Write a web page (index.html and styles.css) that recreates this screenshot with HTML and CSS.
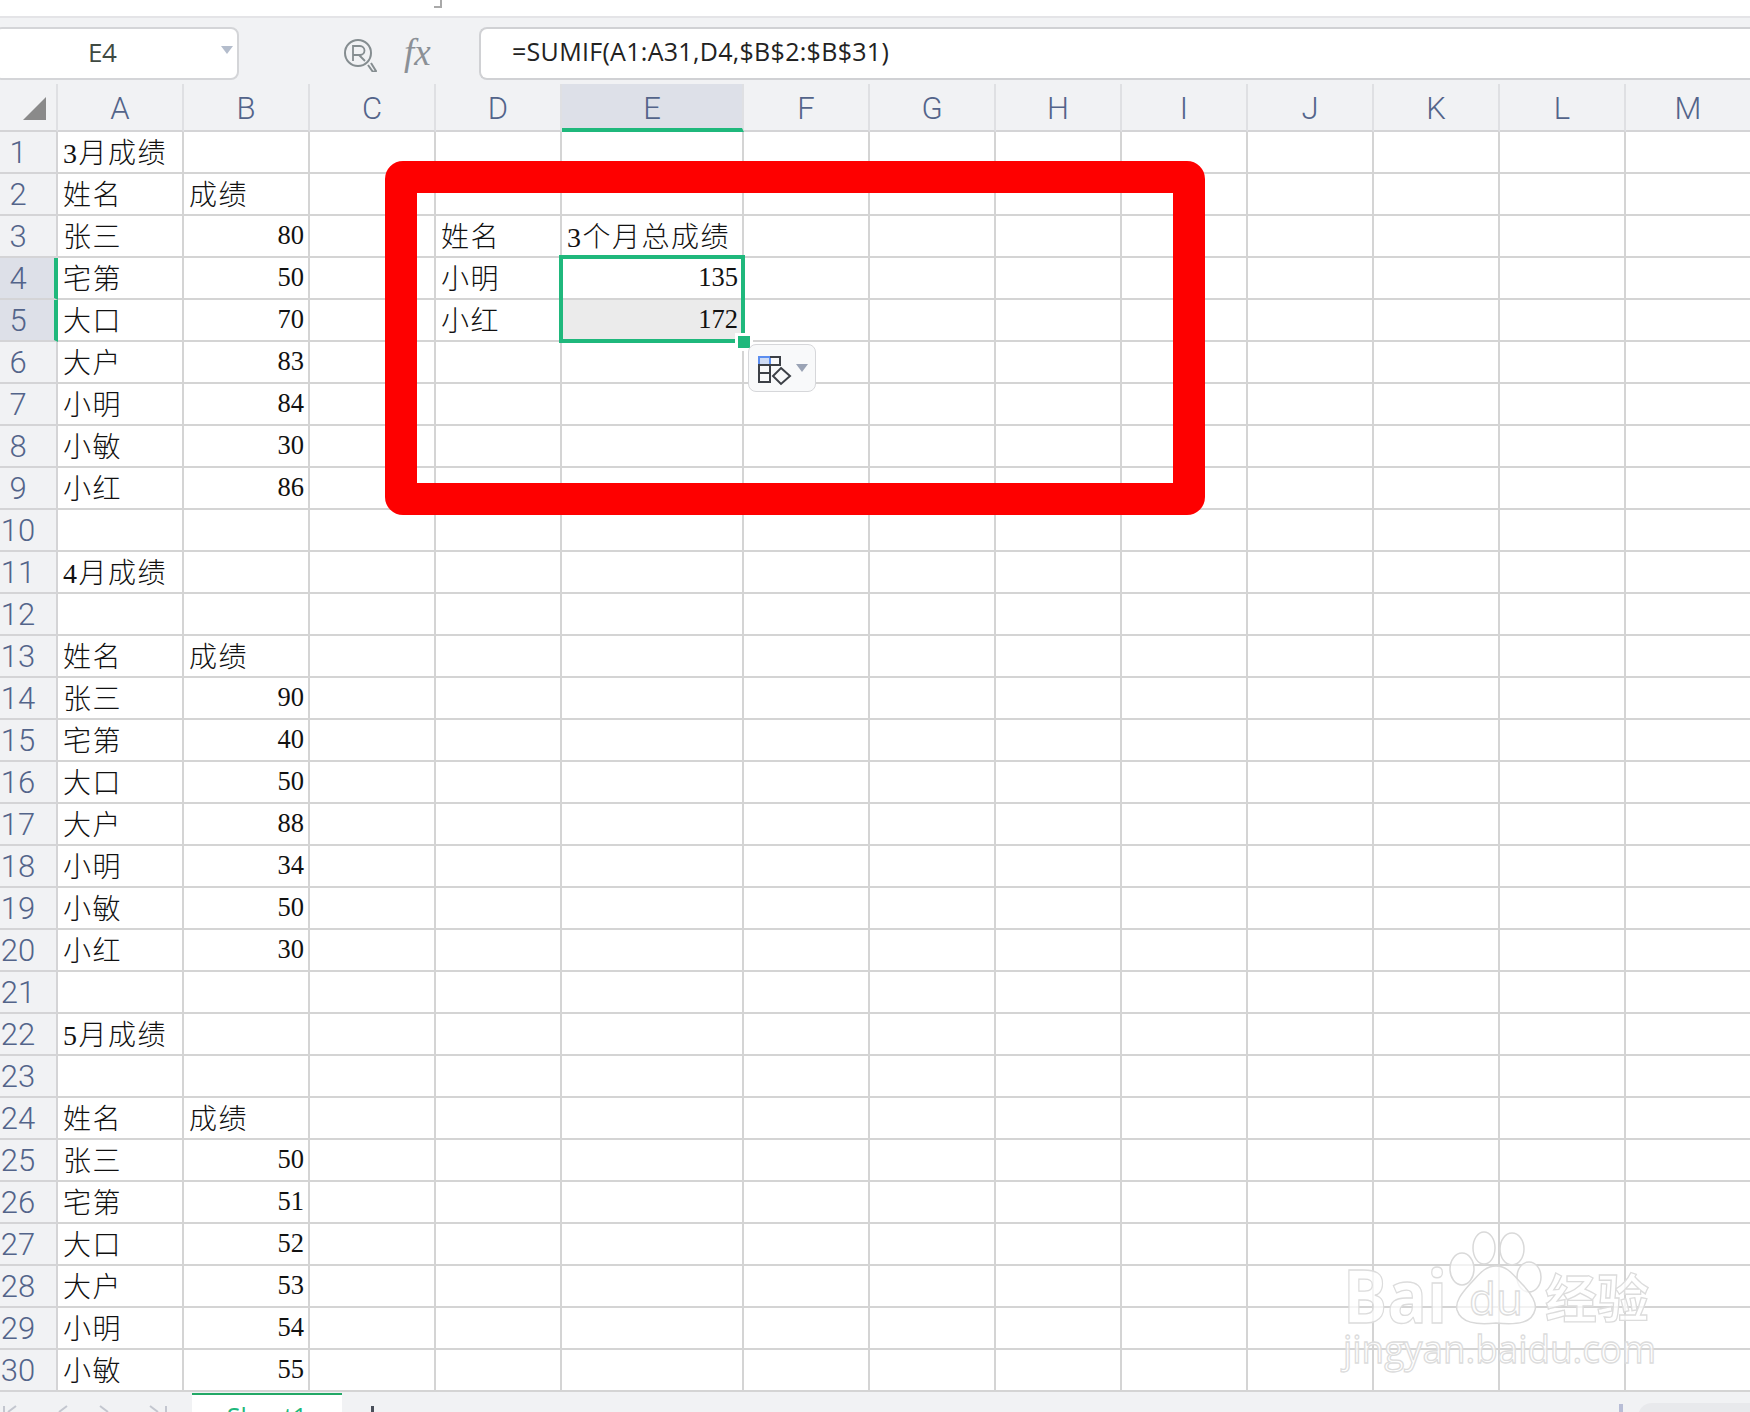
FILE: index.html
```html
<!DOCTYPE html>
<html lang="zh">
<head>
<meta charset="utf-8">
<title>Sheet1</title>
<link rel="stylesheet" href="styles.css">
</head>
<body>
<div class="page">
  <div class="topstrip"><span class="corner-mark"></span></div>
  <div class="fbar">
    <div class="namebox"><span class="nameval">E4</span><span class="namecaret"></span></div>
    <div class="fbtns">
      <svg class="zoomicon" width="34" height="34" viewBox="0 0 34 34" fill="none" stroke="#858d90" stroke-width="2"><circle cx="15" cy="15" r="13"/><path d="M28 25l5 8-3 1-5-7"/><path d="M10 23V8h7a4 4 0 0 1 0 9h-7M16 17l6 6" stroke-width="1.8"/></svg>
      <span class="fx">fx</span>
    </div>
    <div class="formula">=SUMIF(A1:A31,D4,$B$2:$B$31)</div>
  </div>
  <table class="sheet">
    <colgroup><col class="c-h"><col class="c-n"><col class="c-n"><col class="c-n"><col class="c-n"><col class="c-w"><col class="c-n"><col class="c-n"><col class="c-n"><col class="c-n"><col class="c-n"><col class="c-n"><col class="c-n"><col class="c-n"></colgroup>
    <thead><tr><th class="corner"><span class="tri"></span></th><th>A</th><th>B</th><th>C</th><th>D</th><th class="sel">E</th><th>F</th><th>G</th><th>H</th><th>I</th><th>J</th><th>K</th><th>L</th><th>M</th></tr></thead>
    <tbody>
      <tr><th>1</th><td>3月成绩</td><td></td><td></td><td></td><td></td><td></td><td></td><td></td><td></td><td></td><td></td><td></td><td></td></tr>
      <tr><th>2</th><td>姓名</td><td>成绩</td><td></td><td></td><td></td><td></td><td></td><td></td><td></td><td></td><td></td><td></td><td></td></tr>
      <tr><th>3</th><td>张三</td><td class="n">80</td><td></td><td>姓名</td><td>3个月总成绩</td><td></td><td></td><td></td><td></td><td></td><td></td><td></td><td></td></tr>
      <tr><th class="sel">4</th><td>宅第</td><td class="n">50</td><td></td><td>小明</td><td class="n">135</td><td></td><td></td><td></td><td></td><td></td><td></td><td></td><td></td></tr>
      <tr><th class="sel">5</th><td>大口</td><td class="n">70</td><td></td><td>小红</td><td class="n grey">172</td><td></td><td></td><td></td><td></td><td></td><td></td><td></td><td></td></tr>
      <tr><th>6</th><td>大户</td><td class="n">83</td><td></td><td></td><td></td><td></td><td></td><td></td><td></td><td></td><td></td><td></td><td></td></tr>
      <tr><th>7</th><td>小明</td><td class="n">84</td><td></td><td></td><td></td><td></td><td></td><td></td><td></td><td></td><td></td><td></td><td></td></tr>
      <tr><th>8</th><td>小敏</td><td class="n">30</td><td></td><td></td><td></td><td></td><td></td><td></td><td></td><td></td><td></td><td></td><td></td></tr>
      <tr><th>9</th><td>小红</td><td class="n">86</td><td></td><td></td><td></td><td></td><td></td><td></td><td></td><td></td><td></td><td></td><td></td></tr>
      <tr><th>10</th><td></td><td></td><td></td><td></td><td></td><td></td><td></td><td></td><td></td><td></td><td></td><td></td><td></td></tr>
      <tr><th>11</th><td>4月成绩</td><td></td><td></td><td></td><td></td><td></td><td></td><td></td><td></td><td></td><td></td><td></td><td></td></tr>
      <tr><th>12</th><td></td><td></td><td></td><td></td><td></td><td></td><td></td><td></td><td></td><td></td><td></td><td></td><td></td></tr>
      <tr><th>13</th><td>姓名</td><td>成绩</td><td></td><td></td><td></td><td></td><td></td><td></td><td></td><td></td><td></td><td></td><td></td></tr>
      <tr><th>14</th><td>张三</td><td class="n">90</td><td></td><td></td><td></td><td></td><td></td><td></td><td></td><td></td><td></td><td></td><td></td></tr>
      <tr><th>15</th><td>宅第</td><td class="n">40</td><td></td><td></td><td></td><td></td><td></td><td></td><td></td><td></td><td></td><td></td><td></td></tr>
      <tr><th>16</th><td>大口</td><td class="n">50</td><td></td><td></td><td></td><td></td><td></td><td></td><td></td><td></td><td></td><td></td><td></td></tr>
      <tr><th>17</th><td>大户</td><td class="n">88</td><td></td><td></td><td></td><td></td><td></td><td></td><td></td><td></td><td></td><td></td><td></td></tr>
      <tr><th>18</th><td>小明</td><td class="n">34</td><td></td><td></td><td></td><td></td><td></td><td></td><td></td><td></td><td></td><td></td><td></td></tr>
      <tr><th>19</th><td>小敏</td><td class="n">50</td><td></td><td></td><td></td><td></td><td></td><td></td><td></td><td></td><td></td><td></td><td></td></tr>
      <tr><th>20</th><td>小红</td><td class="n">30</td><td></td><td></td><td></td><td></td><td></td><td></td><td></td><td></td><td></td><td></td><td></td></tr>
      <tr><th>21</th><td></td><td></td><td></td><td></td><td></td><td></td><td></td><td></td><td></td><td></td><td></td><td></td><td></td></tr>
      <tr><th>22</th><td>5月成绩</td><td></td><td></td><td></td><td></td><td></td><td></td><td></td><td></td><td></td><td></td><td></td><td></td></tr>
      <tr><th>23</th><td></td><td></td><td></td><td></td><td></td><td></td><td></td><td></td><td></td><td></td><td></td><td></td><td></td></tr>
      <tr><th>24</th><td>姓名</td><td>成绩</td><td></td><td></td><td></td><td></td><td></td><td></td><td></td><td></td><td></td><td></td><td></td></tr>
      <tr><th>25</th><td>张三</td><td class="n">50</td><td></td><td></td><td></td><td></td><td></td><td></td><td></td><td></td><td></td><td></td><td></td></tr>
      <tr><th>26</th><td>宅第</td><td class="n">51</td><td></td><td></td><td></td><td></td><td></td><td></td><td></td><td></td><td></td><td></td><td></td></tr>
      <tr><th>27</th><td>大口</td><td class="n">52</td><td></td><td></td><td></td><td></td><td></td><td></td><td></td><td></td><td></td><td></td><td></td></tr>
      <tr><th>28</th><td>大户</td><td class="n">53</td><td></td><td></td><td></td><td></td><td></td><td></td><td></td><td></td><td></td><td></td><td></td></tr>
      <tr><th>29</th><td>小明</td><td class="n">54</td><td></td><td></td><td></td><td></td><td></td><td></td><td></td><td></td><td></td><td></td><td></td></tr>
      <tr><th>30</th><td>小敏</td><td class="n">55</td><td></td><td></td><td></td><td></td><td></td><td></td><td></td><td></td><td></td><td></td><td></td></tr>
    </tbody>
  </table>
  <div class="tabbar">
    <svg class="tabnav" width="170" height="20" viewBox="0 0 170 20" fill="none" stroke="#c3c6cf" stroke-width="2"><path d="M4 14v6M16 14l-8 6M67 14l-8 6M100 14l8 6M150 14l8 6M166 14v6"/></svg>
    <div class="tab">Sheet1</div>
    <span class="tabadd"></span>
    <span class="tabsplit"></span>
    <span class="tabscroll"></span>
  </div>

  <div class="redbox"></div>
  <div class="selection"><span class="handle"></span></div>
  <div class="pastebtn">
    <svg width="66" height="46" viewBox="0 0 66 46" fill="none" stroke="#3c4046" stroke-width="2"><rect x="10" y="12" width="11" height="8" fill="#cfdcf5" stroke="#5b8def"/><path d="M21 12h10v8H21M10 20h11v17H10zM10 28h11"/><path d="M32 23l9 8-9 8-8-8z" fill="#f8f9fa"/><path d="M47 19h12l-6 8z" fill="#9aa3b5" stroke="none"/></svg>
  </div>
  <svg class="watermark" width="330" height="160" viewBox="0 0 330 160" aria-label="Baidu 经验">
    <g class="wm-shape"><ellipse cx="122" cy="43" rx="12" ry="16"/><ellipse cx="144" cy="22" rx="11" ry="16"/><ellipse cx="172" cy="23" rx="12" ry="16"/><ellipse cx="189" cy="51" rx="12" ry="15"/><path d="M156 40c12 0 18 10 26 18 10 10 15 20 13 26-3 13-17 15-39 13-20 2-35 0-39-13-2-8 4-16 13-26 8-8 14-18 26-18z"/></g>
    <text class="wm-big" x="3" y="97" textLength="104" lengthAdjust="spacingAndGlyphs">Bai</text>
    <text class="wm-du" x="129" y="89">du</text>
    <text class="wm-cn" x="205" y="92">经验</text>
    <text class="wm-url" x="3" y="137" textLength="313" lengthAdjust="spacingAndGlyphs">jingyan.baidu.com</text>
  </svg>
</div>
</body>
</html>
```

FILE: styles.css
```css
html, body { margin: 0; padding: 0; background: #fff; }
.page { position: relative; width: 1750px; height: 1412px; overflow: hidden; background: #fff; }

.topstrip { position: relative; height: 16px; border-bottom: 2px solid #e4e4e7; box-sizing: content-box; }
.corner-mark { position: absolute; left: 434px; top: 0; width: 8px; height: 8px; border-right: 2px solid #a9a9a9; border-bottom: 2px solid #a9a9a9; box-sizing: border-box; }

.fbar { display: flex; height: 66px; padding-top: 9px; box-sizing: border-box; background: #f1f2f4; }
.namebox { position: relative; flex: none; width: 245px; height: 53px; margin-left: -6px; background: #fff; border: 2px solid #d4d5d8; border-radius: 8px; box-sizing: border-box; display: flex; align-items: center; padding: 0 0 3px 92px; }
.nameval { font: 26px "Open Sans", sans-serif; color: #3f4a42; letter-spacing: -.5px; }
.namecaret { position: absolute; right: 4px; top: 17px; width: 0; height: 0; border-left: 6px solid transparent; border-right: 6px solid transparent; border-top: 8px solid #b4bdcc; }
.fbtns { flex: none; width: 240px; display: flex; align-items: center; gap: 27px; padding: 0 0 6px 104px; box-sizing: border-box; }
.zoomicon { flex: none; margin-top: 4px; }
.fx { font: italic 37px "Liberation Serif", serif; color: #8b9096; }
.formula { flex: 1; height: 53px; background: #fff; border: 2px solid #d0d1d4; border-right: 0; border-radius: 8px 0 0 8px; box-sizing: border-box; padding-left: 31px; font: 25px/44px "Open Sans", sans-serif; color: #222; letter-spacing: .3px; }

.sheet { table-layout: fixed; width: 1752px; border-collapse: separate; border-spacing: 0; }
.c-h { width: 58px; }
.c-n { width: 126px; }
.c-w { width: 182px; }

.sheet th { padding: 0; box-sizing: border-box; background: #f1f2f4; color: #53648a; font-family: Roboto, sans-serif; font-weight: 300; font-size: 31px; line-height: 1; border-right: 2px solid #d4d4d6; border-bottom: 2px solid #d4d4d6; }
.sheet thead th { height: 48px; padding: 2px 0 0 0; border-right-color: #dfe0e3; }
.sheet tbody th { height: 42px; padding-right: 20px; }
.sheet th.sel { background: #dde0e8; }
.sheet thead th.sel { border-bottom: 4px solid #1fb87c; padding-top: 4px; }
.sheet tbody th.sel { border-right: 4px solid #1fb87c; padding-right: 18px; }
.corner { position: relative; }
.tri { position: absolute; left: 23px; top: 13px; width: 0; height: 0; border-left: 23px solid transparent; border-bottom: 23px solid #8a8a8a; }

.sheet td { height: 42px; box-sizing: border-box; padding: 4px 0 0 5px; border-right: 2px solid #d4d4d4; border-bottom: 2px solid #d4d4d4; font-family: "Liberation Serif", "Noto Sans CJK SC", serif; font-weight: 300; font-size: 28px; letter-spacing: 1.500px; line-height: 1; color: #111; white-space: nowrap; overflow: hidden; }
.sheet td.n { padding: 0 4px 1px 0; text-align: right; font-size: 26.500px; letter-spacing: 0; }
.sheet td.grey { background: #ebebeb; }

.tabbar { position: relative; display: flex; height: 20px; background: #f1f2f4; overflow: hidden; }
.tabnav { flex: none; margin-right: 22px; }
.tab { flex: none; width: 150px; height: 40px; box-sizing: border-box; margin-top: 1px; background: #fff; border-top: 2px solid #22a866; text-align: center; font: 25px/38px "Open Sans", sans-serif; color: #1fb87c; padding-top: 2px; }
.tabadd { flex: none; width: 3px; height: 6px; margin: 14px 0 0 29px; background: #4a4f5a; }
.tabsplit { flex: none; width: 4px; height: 8px; margin: 12px 0 0 1245px; background: #b8bdd6; }
.tabscroll { flex: none; width: 120px; height: 20px; margin: 11px 0 0 15px; background: #e8e9ec; border-radius: 14px 0 0 0; }

.redbox { position: absolute; left: 385px; top: 161px; width: 820px; height: 354px; box-sizing: border-box; border: 32px solid #fe0000; border-radius: 18px; }
.selection { position: absolute; left: 559px; top: 255px; width: 186px; height: 88px; box-sizing: border-box; border: 4px solid #1fb87c; }
.handle { position: absolute; right: -9px; bottom: -9px; width: 12px; height: 12px; background: #1fb87c; box-shadow: 0 0 0 3px #fff; }
.pastebtn { position: absolute; left: 748px; top: 344px; width: 68px; height: 48px; box-sizing: border-box; background: #f8f9fa; border: 1px solid #d6d7da; border-radius: 8px; }

.watermark { position: absolute; left: 1340px; top: 1226px; }
.wm-shape { fill: #fff; fill-opacity: .7; stroke: #d9d9d9; stroke-width: 1.5; }
.wm-big, .wm-du, .wm-cn, .wm-url { fill: #fff; fill-opacity: .75; stroke: #dcdcdc; stroke-width: 1.3; font-family: "Open Sans", "Noto Sans CJK SC", sans-serif; }
.wm-big { font-size: 74px; font-weight: 700; }
.wm-du { font-size: 44px; }
.wm-cn { font-size: 52px; font-weight: 700; }
.wm-url { font-size: 38px; }
```
